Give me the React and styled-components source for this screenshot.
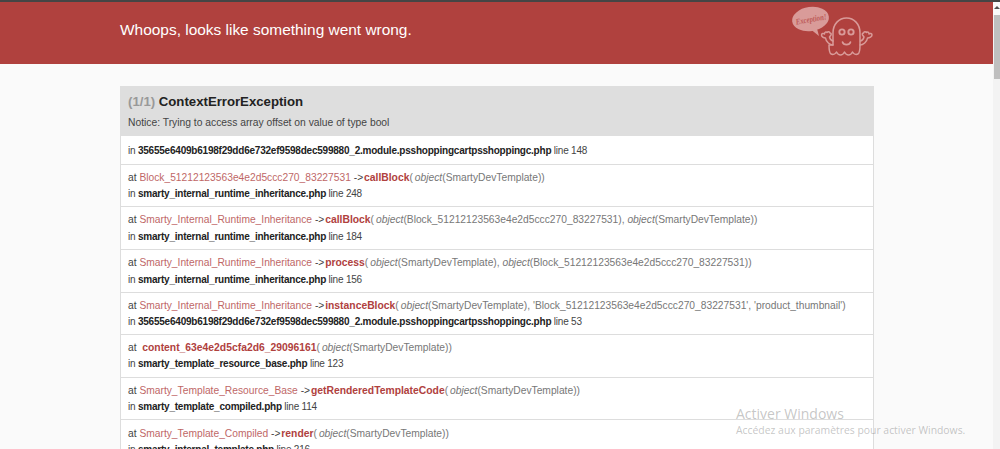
import React from 'react';
import styled, { createGlobalStyle } from 'styled-components';

const Global = createGlobalStyle`
  html, body { margin: 0; padding: 0; height: 449px; overflow: hidden; background: #fafafa; }
  body { font-family: "Liberation Sans", Arial, sans-serif; }
`;
const Page = styled.div`
  position: relative;
  width: 1000px;
  height: 449px;
  overflow: hidden;
  background: #fafafa;
  color: #444;
`;
const TopEdge = styled.div`
  height: 2px;
  background: #454545;
`;
const Banner = styled.header`
  height: 62px;
  background: #b0413e;
  display: flex;
  padding: 0 126px 0 120px;
`;
const Title = styled.h1`
  margin: 18px 0 0;
  font-size: 15.45px;
  line-height: 20px;
  font-weight: 400;
  color: #fff;
`;
const Ghost = styled.svg`
  flex: none;
  width: 84px;
  height: 54px;
  margin: 2px 0 0 auto;
`;
const Main = styled.main`
  width: 754px;
  margin: 22px 0 0 120px;
`;
const Head = styled.div`
  height: 50px;
  box-sizing: border-box;
  background: #dedede;
  padding: 7px 8px 0;
`;
const HeadTitle = styled.h2`
  margin: 0;
  font-size: 13.2px;
  line-height: 17px;
  font-weight: 700;
  color: #222;
`;
const Count = styled.span`
  color: #999;
`;
const Message = styled.p`
  margin: 6px 0 0;
  font-size: 10.3px;
  line-height: 14px;
  color: #444;
`;
const Row = styled.div`
  box-sizing: border-box;
  height: ${p => p.$h}px;
  background: #fff;
  border: 1px solid #dddddd;
  border-top: 0;
  padding: ${p => p.$pad}px 7px 0;
  white-space: nowrap;
`;
const CallLine = styled.div`
  height: ${p => p.$h}px;
  line-height: 16px;
  font-size: 10.25px;
`;
const FileLine = styled.div`
  height: 16px;
  line-height: 16px;
  font-size: 10px;
  letter-spacing: -0.22px;
`;
const Cls = styled.span`
  color: #b0413e;
  opacity: .8;
`;
const ArrowText = styled.span`
  margin-right: -2px;
`;
const Fn = styled.strong`
  color: #b0413e;
  font-weight: 700;
  font-size: 10.35px;
`;
const Obj = styled.em`
  color: #777;
  padding-left: ${p => (p.$lead ? 2 : 0)}px;
`;
const Arg = styled.span`
  color: #777;
`;
const File = styled.strong`
  color: #222;
  font-weight: 700;
`;
const Track = styled.div`
  position: absolute;
  top: 2px;
  right: 0;
  bottom: 0;
  width: 7px;
  background: #f3f3f3;
`;
const TrackHead = styled.div`
  height: 13px;
  background: #fafafa;
  display: flex;
  justify-content: center;
  padding-top: 4px;
  box-sizing: border-box;
`;
const Arrow = styled.div`
  width: 0;
  height: 0;
  border-left: 3px solid transparent;
  border-right: 3px solid transparent;
  border-bottom: 3px solid #505050;
`;
const Thumb = styled.div`
  margin-left: 1px;
  height: 64px;
  background: #bfbfbf;
`;
const Watermark = styled.div`
  position: absolute;
  left: 736px;
  top: 406px;
  color: rgba(110, 110, 110, .4);
  font-family: "Open Sans", sans-serif;
  pointer-events: none;
`;
const WmTitle = styled.div`
  font-size: 14px;
  line-height: 16px;
`;
const WmSub = styled.div`
  margin-top: 1px;
  font-size: 10.4px;
  line-height: 14px;
  white-space: nowrap;
`;

const O = ({ children }) => <><Arg>(</Arg><Obj $lead>object</Obj><Arg>({children})</Arg></>;
const Opt = ({ children }) => <><Arg>, </Arg><Obj>object</Obj><Arg>({children})</Arg></>;
const At = ({ c, f, children }) => <>at <Cls>{c}</Cls> <ArrowText>-&gt;</ArrowText> <Fn>{f}</Fn>{children}</>;

const BLOCK = 'Block_51212123563e4e2d5ccc270_83227531';
const INH = 'Smarty_Internal_Runtime_Inheritance';
const TPL = 'SmartyDevTemplate';

const rows = [
  { h: 29, pad: 7, file: '35655e6409b6198f29dd6e732ef9598dec599880_2.module.psshoppingcartpsshoppingc.php', line: 148 },
  { h: 42, pad: 5, gap: 16, call: <At c={BLOCK} f="callBlock"><O>{TPL}</O><Arg>)</Arg></At>, file: 'smarty_internal_runtime_inheritance.php', line: 248 },
  { h: 43, pad: 5, gap: 17, call: <At c={INH} f="callBlock"><O>{BLOCK}</O><Opt>{TPL}</Opt><Arg>)</Arg></At>, file: 'smarty_internal_runtime_inheritance.php', line: 184 },
  { h: 43, pad: 5, gap: 17, call: <At c={INH} f="process"><O>{TPL}</O><Opt>{BLOCK}</Opt><Arg>)</Arg></At>, file: 'smarty_internal_runtime_inheritance.php', line: 156 },
  { h: 42, pad: 5, gap: 16, call: <At c={INH} f="instanceBlock"><O>{TPL}</O><Arg>, '{BLOCK}', 'product_thumbnail')</Arg></At>, file: '35655e6409b6198f29dd6e732ef9598dec599880_2.module.psshoppingcartpsshoppingc.php', line: 53 },
  { h: 43, pad: 5, gap: 16, call: <>at &nbsp;<Fn>content_63e4e2d5cfa2d6_29096161</Fn><O>{TPL}</O><Arg>)</Arg></>, file: 'smarty_template_resource_base.php', line: 123 },
  { h: 42, pad: 5, gap: 16, call: <At c="Smarty_Template_Resource_Base" f="getRenderedTemplateCode"><O>{TPL}</O><Arg>)</Arg></At>, file: 'smarty_template_compiled.php', line: 114 },
  { h: 42, pad: 6, gap: 16, call: <At c="Smarty_Template_Compiled" f="render"><O>{TPL}</O><Arg>)</Arg></At>, file: 'smarty_internal_template.php', line: 216 },
];

export default function App() {
  return (
    <Page>
      <Global />
      <TopEdge />
      <Banner>
        <Title>Whoops, looks like something went wrong.</Title>
        <Ghost viewBox="0 0 84 54" aria-hidden="true">
          <ellipse cx="20.5" cy="15" rx="18.5" ry="12" fill="#d99b99" transform="rotate(-8 20.5 15)" />
          <path d="M19 24l10 8-3-11z" fill="#d99b99" />
          <text x="21" y="18" textAnchor="middle" fontSize="8.5" fontWeight="700" fontStyle="italic" fontFamily="Liberation Serif, serif" fill="#bd5a57" textLength="31" lengthAdjust="spacingAndGlyphs" transform="rotate(-10 21 15)">Exception!</text>
          <g fill="none" stroke="#d99b99" strokeWidth="1.5" strokeLinecap="round" strokeLinejoin="round">
            <path d="M43 41V29c0-9 6-15 13.500-15S70 20 70 29v12c0 5-.5 8-2 9-2 1-4.500 0-5.500-2-1 2-2.500 3-4 3s-3-1-4-3c-1 2-2.500 3-4 3s-3-1-4-3c-1 2-3.500 3-5.500 2-1.500-1-2-4-2-9z" />
            <path d="M43 41c-3 0-7-3-7.500-7-2 0-4-1.500-4-3s2-2 3-1c0-2 1.500-2.500 2.500-1.500 1-1 2.500-1 3 .5 1 0 1.500 1 1 2l-1.500 2c.5 2 1.500 3.500 3.500 4" />
            <path d="M70 41c3 0 7-3 7.500-7 2 0 4.500-1.500 4.500-3s-2-2-3-1c0-2-1.500-2.500-2.500-1.500-1-1-2.500-1-3 .5-1 0-1.500 1-1 2l1.500 2c-.5 2-1.500 3.500-3.500 4" />
            <path d="M52.500 38c1 3.500 7 3.500 8 0" strokeWidth="1.7" />
          </g>
          <circle cx="52" cy="28" r="3.600" fill="#d99b99" />
          <circle cx="61" cy="28" r="3.600" fill="#d99b99" />
          <circle cx="52" cy="28" r="1.700" fill="#b0413e" />
          <circle cx="61" cy="28" r="1.700" fill="#b0413e" />
        </Ghost>
      </Banner>
      <Main>
        <Head>
          <HeadTitle><Count>(1/1)</Count> ContextErrorException</HeadTitle>
          <Message>Notice: Trying to access array offset on value of type bool</Message>
        </Head>
        {rows.map((r, i) => (
          <Row key={i} $h={r.h} $pad={r.pad}>
            {r.call && <CallLine $h={r.gap}>{r.call}</CallLine>}
            <FileLine>in <File>{r.file}</File> line {r.line}</FileLine>
          </Row>
        ))}
      </Main>
      <Track><TrackHead><Arrow /></TrackHead><Thumb /></Track>
      <Watermark>
        <WmTitle>Activer Windows</WmTitle>
        <WmSub>Accédez aux paramètres pour activer Windows.</WmSub>
      </Watermark>
    </Page>
  );
}
